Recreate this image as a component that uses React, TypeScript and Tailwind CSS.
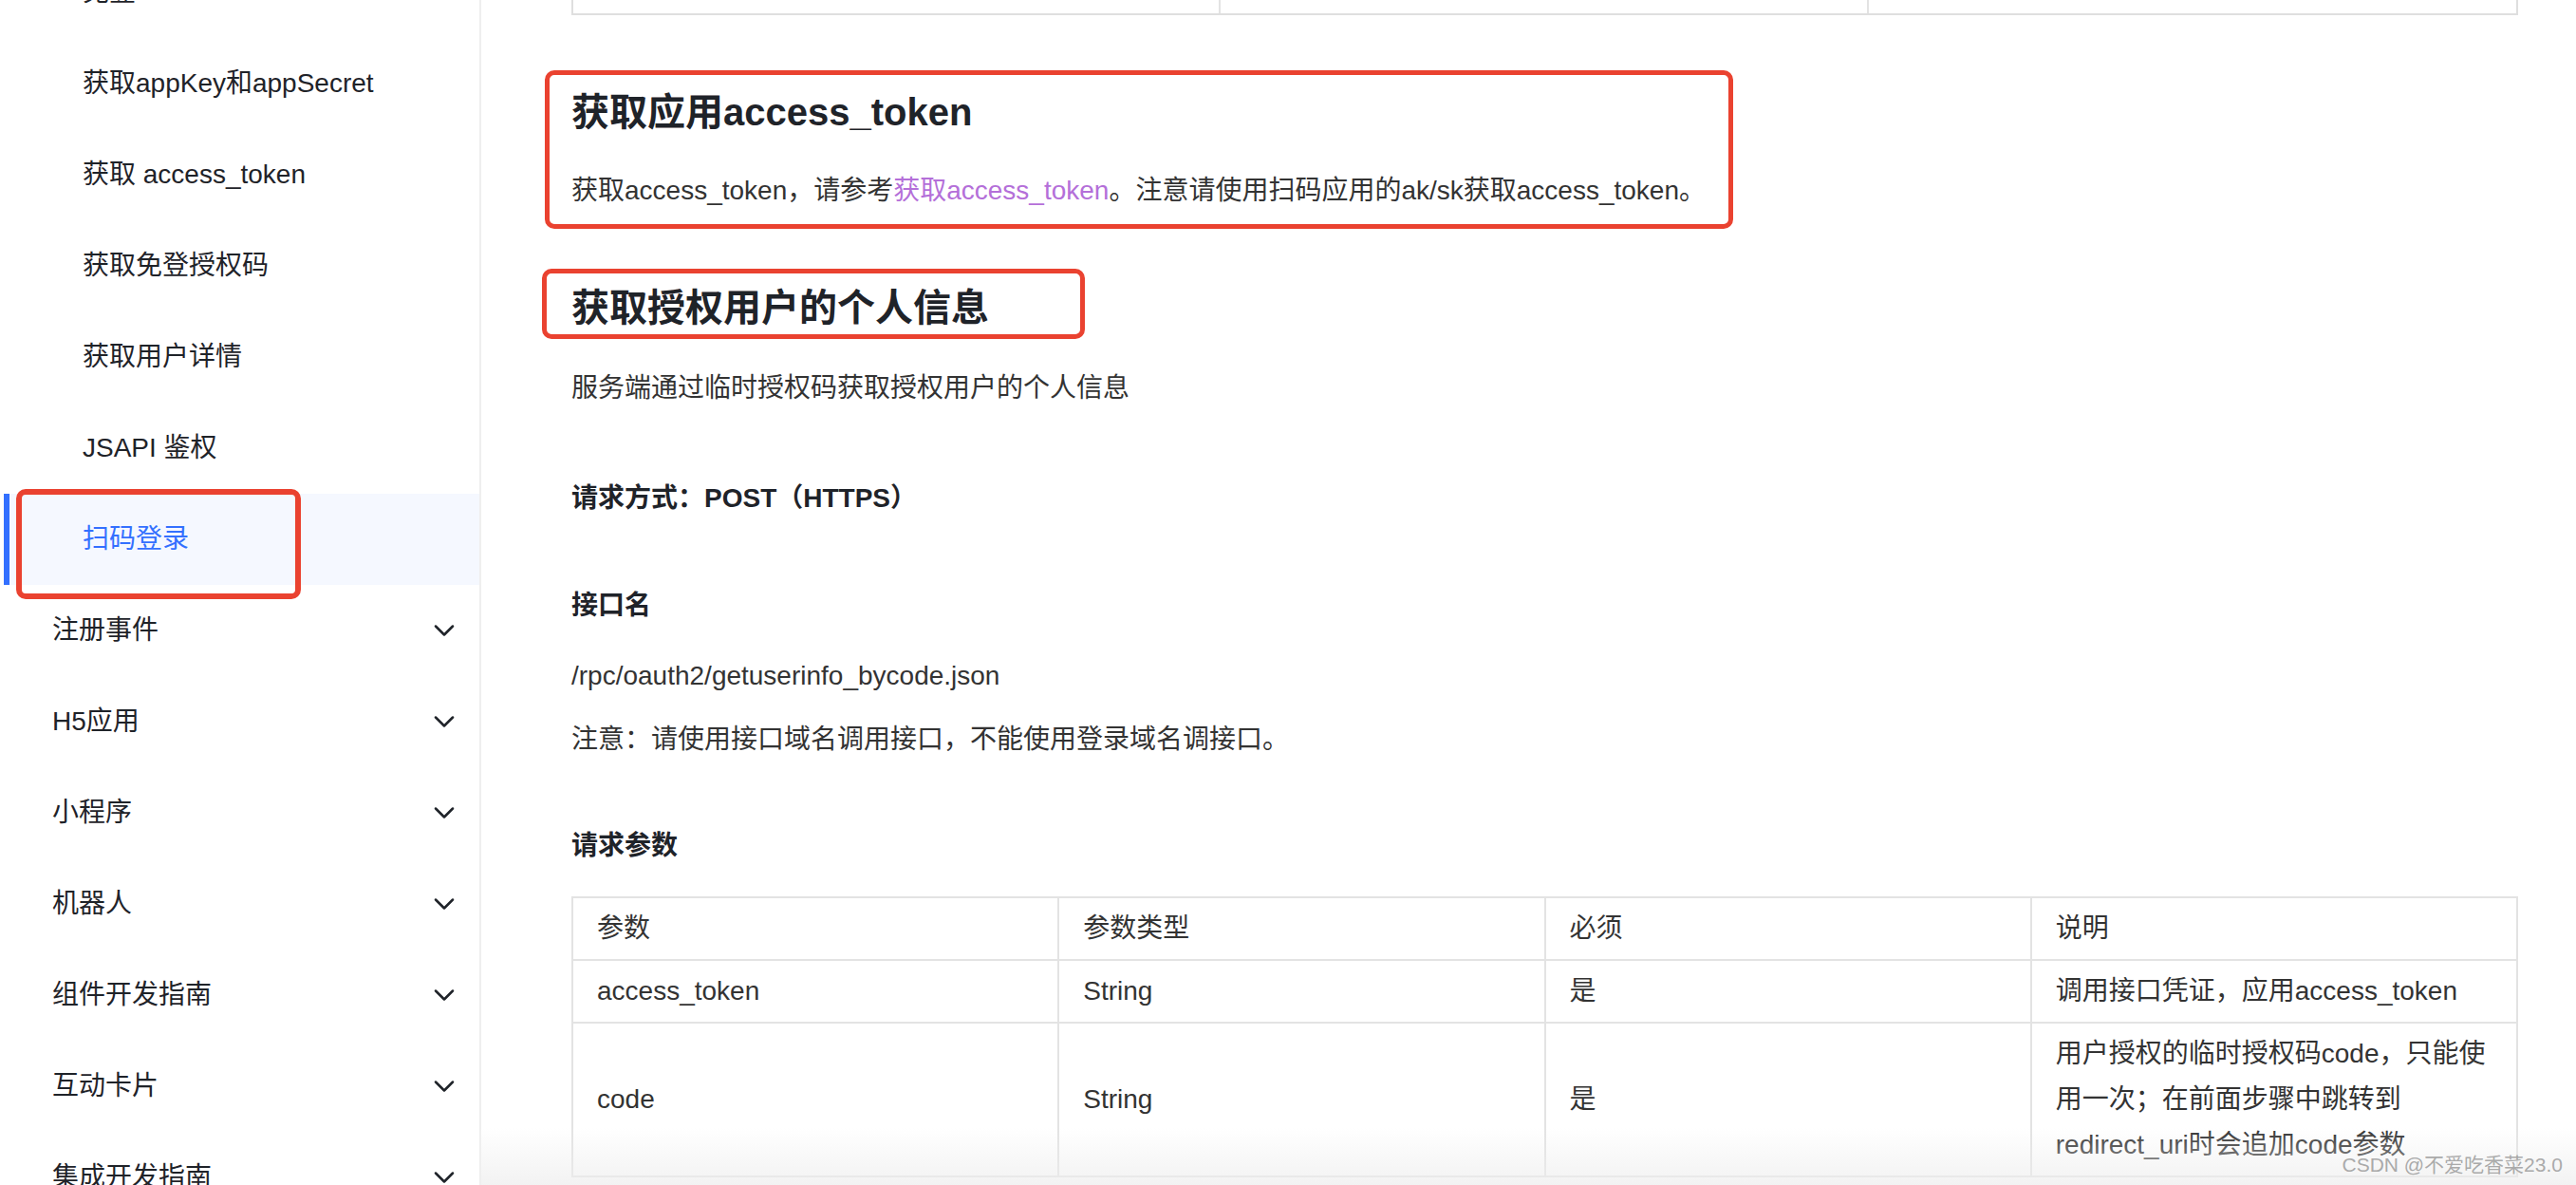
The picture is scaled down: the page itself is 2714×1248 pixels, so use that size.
import { ChevronDown } from "lucide-react";

const font = {
  fontFamily: '"Liberation Sans", "Noto Sans CJK SC", sans-serif',
};

type NavItem = {
  label: string;
  sub?: boolean;
  active?: boolean;
};

const navItems: NavItem[] = [
  { label: "免登", sub: true },
  { label: "获取appKey和appSecret", sub: true },
  { label: "获取 access_token", sub: true },
  { label: "获取免登授权码", sub: true },
  { label: "获取用户详情", sub: true },
  { label: "JSAPI 鉴权", sub: true },
  { label: "扫码登录", sub: true, active: true },
  { label: "注册事件" },
  { label: "H5应用" },
  { label: "小程序" },
  { label: "机器人" },
  { label: "组件开发指南" },
  { label: "互动卡片" },
  { label: "集成开发指南" },
];

const params = [
  { name: "access_token", type: "String", required: "是", desc: "调用接口凭证，应用access_token" },
  {
    name: "code",
    type: "String",
    required: "是",
    desc: "用户授权的临时授权码code，只能使用一次；在前面步骤中跳转到redirect_uri时会追加code参数",
  },
];

const Sidebar = () => (
  <aside className="h-full w-[507px] shrink-0 border-r-2 border-[#efefef]">
    <ul className="-mt-[56px]">
      {navItems.map((item) =>
        item.active ? (
          <li
            key={item.label}
            className="relative ml-[4px] flex h-[96px] items-center border-l-[6px] border-[#3370ff] bg-[#f5f8ff] pl-[77px] text-[28px] text-[#3370ff]"
          >
            {item.label}
            <span className="pointer-events-none absolute -top-[5px] left-[7px] h-[116px] w-[300px] rounded-[10px] border-[6px] border-[#ea4230]" />
          </li>
        ) : item.sub ? (
          <li
            key={item.label}
            className="flex h-[96px] items-center pl-[87px] text-[28px] text-[#1f2329]"
          >
            {item.label}
          </li>
        ) : (
          <li
            key={item.label}
            className="flex h-[96px] items-center justify-between pl-[55px] pr-[19px] text-[28px] text-[#1f2329]"
          >
            <span>{item.label}</span>
            <ChevronDown size={36} strokeWidth={1.7} className="text-[#1f2329]" />
          </li>
        ),
      )}
    </ul>
  </aside>
);

const ParamTable = () => (
  <table className="w-full table-fixed border-collapse border-2 border-[#dfdfdf] text-[28px] leading-[48px] text-[#333]">
    <thead>
      <tr>
        {["参数", "参数类型", "必须", "说明"].map((h) => (
          <th
            key={h}
            className="border-2 border-[#e3e3e3] px-[25px] py-[8px] text-left font-normal"
          >
            {h}
          </th>
        ))}
      </tr>
    </thead>
    <tbody>
      {params.map((p) => (
        <tr key={p.name}>
          <td className="border-2 border-[#e3e3e3] px-[25px] py-[8px] align-middle">{p.name}</td>
          <td className="border-2 border-[#e3e3e3] px-[25px] py-[8px] align-middle">{p.type}</td>
          <td className="border-2 border-[#e3e3e3] px-[25px] py-[8px] align-middle">{p.required}</td>
          <td className="border-2 border-[#e3e3e3] px-[25px] py-[8px] align-middle">{p.desc}</td>
        </tr>
      ))}
    </tbody>
  </table>
);

export default function App() {
  return (
    <div
      className="relative flex h-[1248px] w-[2714px] overflow-hidden bg-white"
      style={font}
    >
      <Sidebar />

      <main className="flex-1 pl-[95px] pr-[61px] text-[28px] text-[#333]">
        {/* tail of the previous table */}
        <div className="grid h-[16px] grid-cols-3 border-x-2 border-b-2 border-[#dfdfdf]">
          <div className="border-r-2 border-[#e3e3e3]" />
          <div className="border-r-2 border-[#e3e3e3]" />
          <div />
        </div>

        <section className="-ml-[28px] mt-[58px] h-[167px] w-[1252px] rounded-[10px] border-[5px] border-[#ea4230] pl-[23px] pt-[11px]">
          <h3 className="text-[40px] font-bold leading-[56px] text-[#1f2329]">
            获取应用access_token
          </h3>
          <p className="mt-[31px] leading-[48px]">
            获取access_token，请参考
            <a className="text-[#b46fd9]">获取access_token</a>
            。注意请使用扫码应用的ak/sk获取access_token。
          </p>
        </section>

        <div className="-ml-[31px] mt-[42px] h-[74px] w-[572px] rounded-[10px] border-[5px] border-[#ea4230] pl-[26px] pt-[8px]">
          <h2 className="text-[40px] font-bold leading-[56px] text-[#1f2329]">
            获取授权用户的个人信息
          </h2>
        </div>

        <p className="mt-[28px] leading-[48px]">服务端通过临时授权码获取授权用户的个人信息</p>

        <p className="mt-[68px] font-bold leading-[48px] text-[#1f2329]">请求方式：POST（HTTPS）</p>

        <h4 className="mt-[65px] font-bold leading-[48px] text-[#1f2329]">接口名</h4>
        <p className="mt-[26px] leading-[48px]">/rpc/oauth2/getuserinfo_bycode.json</p>
        <p className="mt-[19px] leading-[48px]">注意：请使用接口域名调用接口，不能使用登录域名调接口。</p>

        <h4 className="mt-[64px] font-bold leading-[48px] text-[#1f2329]">请求参数</h4>

        <div className="mt-[29px]">
          <ParamTable />
        </div>
      </main>

      <div className="pointer-events-none absolute bottom-0 left-[507px] right-0 h-[60px] bg-gradient-to-b from-white/0 to-[#ededed]/70" />

      <span className="pointer-events-none absolute bottom-[6px] right-[14px] text-[21px] text-[#a0a0a0]/90">
        CSDN @不爱吃香菜23.0
      </span>
    </div>
  );
}
